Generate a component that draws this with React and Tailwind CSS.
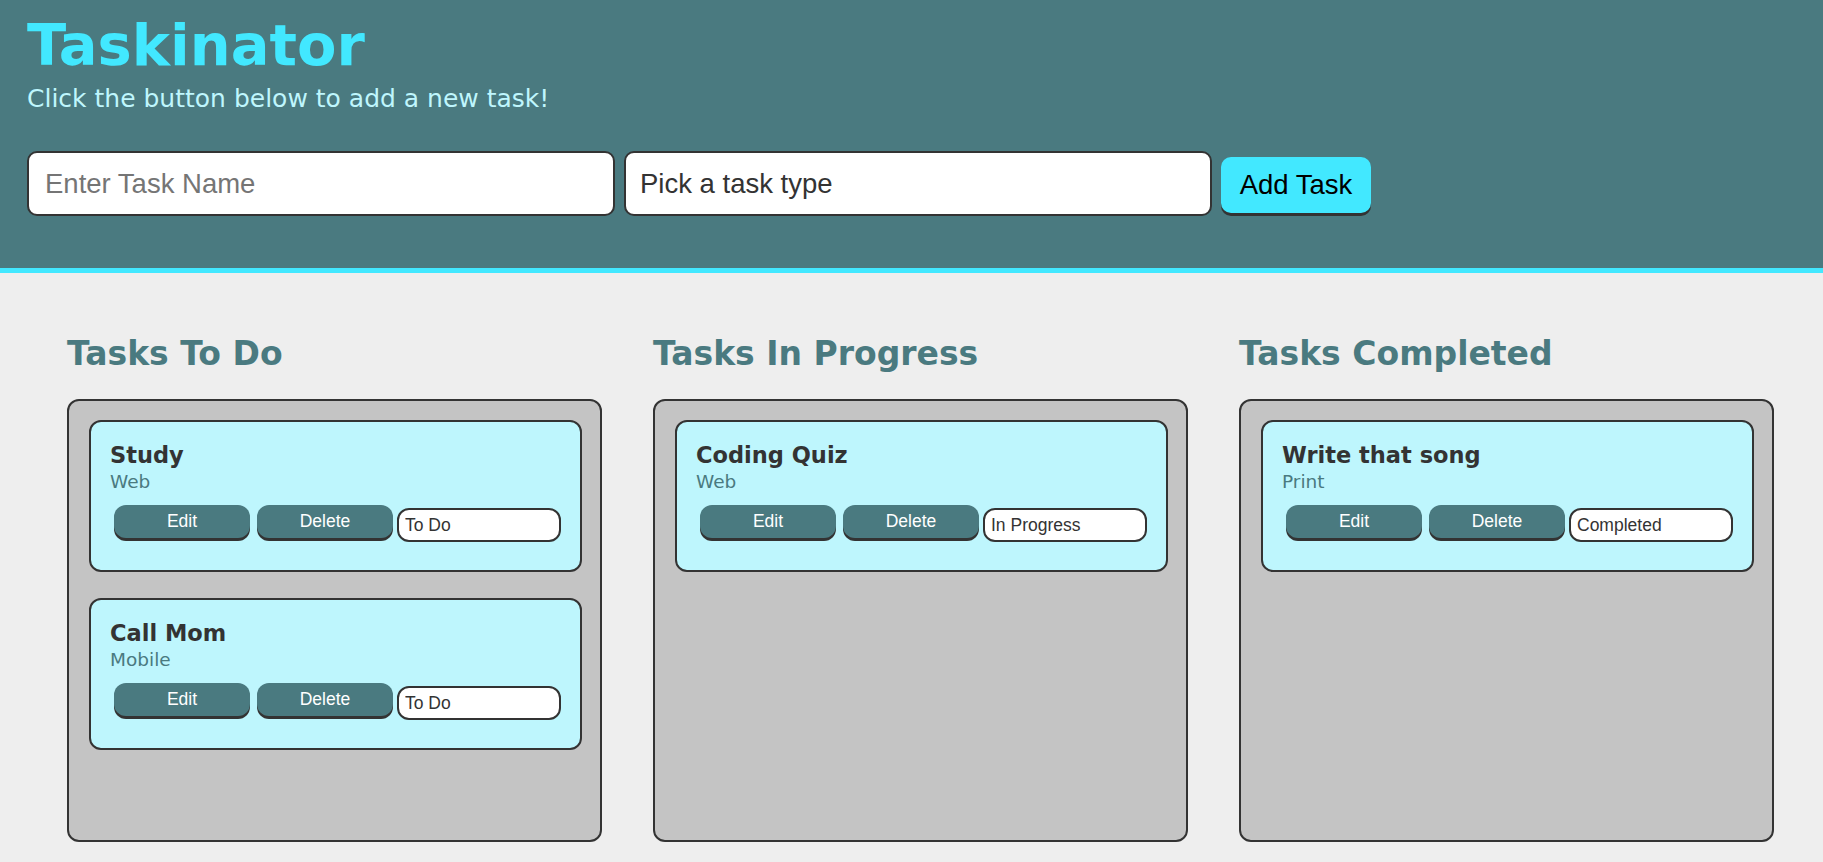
import React from 'react';

const columns = [
  {
    title: 'Tasks To Do',
    tasks: [
      { name: 'Study', type: 'Web', status: 'To Do' },
      { name: 'Call Mom', type: 'Mobile', status: 'To Do' },
    ],
  },
  {
    title: 'Tasks In Progress',
    tasks: [{ name: 'Coding Quiz', type: 'Web', status: 'In Progress' }],
  },
  {
    title: 'Tasks Completed',
    tasks: [{ name: 'Write that song', type: 'Print', status: 'Completed' }],
  },
];

const verdana = { fontFamily: '"DejaVu Sans", Verdana, sans-serif' };
const arial = { fontFamily: '"Liberation Sans", Arial, sans-serif' };

const TaskCard = ({ task }) => (
  <div className="bg-[#bef6fd] border-2 border-[#333333] rounded-[12px] pl-[19px] pr-[19px] pt-[20px] pb-[28px]">
    <h3 className="text-[22.5px] leading-[26px] font-bold text-[#333333]" style={verdana}>
      {task.name}
    </h3>
    <p className="mt-[3px] text-[18.5px] leading-[22px] text-[#4a7a80]" style={verdana}>
      {task.type}
    </p>
    <div className="flex items-start mt-[12px] ml-[4px]" style={arial}>
      <button className="w-[136px] h-[33px] rounded-[12px] bg-[#4a7a80] text-white text-[17.5px] shadow-[0_3px_0_#333333]">
        Edit
      </button>
      <button className="w-[136px] h-[33px] ml-[7px] rounded-[12px] bg-[#4a7a80] text-white text-[17.5px] shadow-[0_3px_0_#333333]">
        Delete
      </button>
      <select
        defaultValue={task.status}
        className="appearance-none w-[164px] h-[34px] ml-[4px] mt-[3px] pl-[6px] bg-white border-2 border-[#333333] rounded-[12px] text-[17.5px] text-[#333333] outline-none"
      >
        <option>To Do</option>
        <option>In Progress</option>
        <option>Completed</option>
      </select>
    </div>
  </div>
);

export default function App() {
  return (
    <div className="min-h-screen bg-[#eeeeee]">
      <header className="h-[273px] bg-[#4a7a80] border-b-[5px] border-[#42e8ff] px-[27px] pt-[12px]">
        <h1 className="text-[57.5px] leading-[67px] font-bold text-[#42e8ff]" style={verdana}>
          Taskinator
        </h1>
        <p className="mt-[5px] text-[25px] leading-[29px] text-[#bff6fd]" style={verdana}>
          Click the button below to add a new task!
        </p>
        <form className="flex items-start mt-[38px]" style={arial} onSubmit={(e) => e.preventDefault()}>
          <input
            type="text"
            placeholder="Enter Task Name"
            className="w-[588px] h-[65px] px-[16px] bg-white border-2 border-[#333333] rounded-[10px] text-[27.5px] text-[#333333] placeholder:text-[#757575] outline-none"
          />
          <select
            defaultValue=""
            className="appearance-none w-[588px] h-[65px] ml-[9px] px-[14px] bg-white border-2 border-[#333333] rounded-[10px] text-[27.5px] text-[#333333] outline-none"
          >
            <option value="" disabled>
              Pick a task type
            </option>
            <option>Web</option>
            <option>Mobile</option>
            <option>Print</option>
          </select>
          <button
            type="submit"
            className="w-[150px] h-[56px] ml-[9px] mt-[6px] rounded-[10px] bg-[#42e8ff] text-black text-[27.5px] shadow-[0_3px_0_#333333]"
          >
            Add Task
          </button>
        </form>
      </header>

      <main className="grid grid-cols-3 gap-[51px] pl-[67px] pr-[49px] pt-[62px]">
        {columns.map((col) => (
          <section key={col.title}>
            <h2 className="text-[33px] leading-[38px] font-bold text-[#4a7a80]" style={verdana}>
              {col.title}
            </h2>
            <div className="mt-[26px] h-[443px] bg-[#c4c4c4] border-2 border-[#333333] rounded-[12px] pl-[20px] pr-[18px] pt-[19px] flex flex-col gap-[26px]">
              {col.tasks.map((task) => (
                <TaskCard key={task.name} task={task} />
              ))}
            </div>
          </section>
        ))}
      </main>
    </div>
  );
}
